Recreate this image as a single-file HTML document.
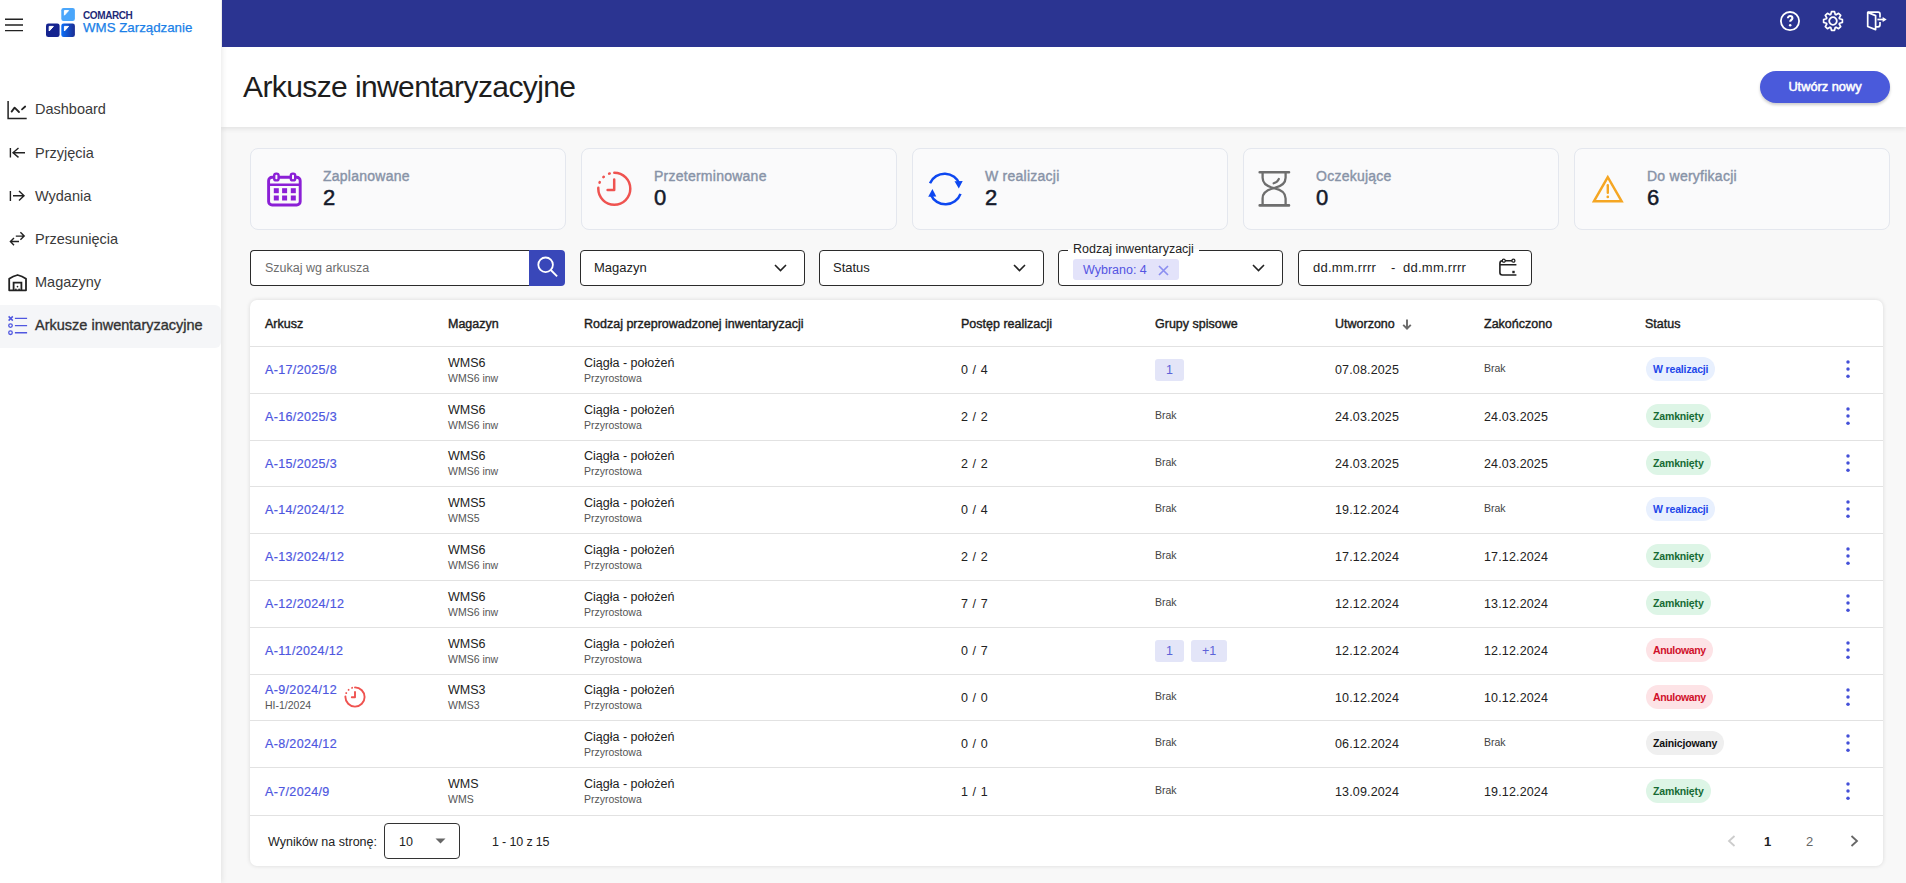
<!DOCTYPE html>
<html><head><meta charset="utf-8">
<style>
*{box-sizing:border-box;margin:0;padding:0}
html,body{width:1906px;height:883px;overflow:hidden}
body{position:relative;background:#F8F8F8;font-family:"Liberation Sans",sans-serif;color:#222}
.abs{position:absolute}
#side{left:0;top:0;width:221px;height:883px;background:#fff;box-shadow:1px 0 6px rgba(0,0,0,.09);z-index:3}
#topbar{left:222px;top:0;width:1684px;height:47px;background:#2B3491;z-index:4}
#phead{left:221px;top:47px;width:1685px;height:80px;background:#fff;box-shadow:0 2px 5px rgba(0,0,0,.09);z-index:2}
.title{left:243px;top:70px;font-size:30px;letter-spacing:-0.6px;color:#1d1d1d;white-space:nowrap;z-index:5}
.btn{left:1760px;top:71px;width:130px;height:32px;border-radius:16px;background:#4A5ADB;color:#fff;-webkit-text-stroke:0.5px #fff;font-size:12.8px;text-align:center;line-height:32px;box-shadow:0 2px 3px rgba(0,0,0,.2);z-index:5}
.nav{position:absolute;left:0;width:221px;height:43px;font-size:14.5px;color:#3a3a3a;white-space:nowrap}
.nav span{position:absolute;left:35px;top:14px}
.nav svg{position:absolute;left:0;top:0}
.nav.act{background:#F5F6F8;border-radius:0 6px 6px 0}
.nav.act span{top:12px;-webkit-text-stroke:0.35px #333;color:#333}
.card{position:absolute;top:148px;width:316px;height:82px;border:1px solid #E4E7EE;border-radius:8px;background:#FAFAFB}
.card .lab{position:absolute;left:72px;top:19px;font-size:14px;color:#8893A7;-webkit-text-stroke:0.4px #8893A7;letter-spacing:0.25px;white-space:nowrap}
.card .val{position:absolute;left:72px;top:36px;font-size:22px;color:#14192A;-webkit-text-stroke:0.5px #14192A}
.card svg{position:absolute;left:0;top:0}
.fld{position:absolute;top:250px;height:36px;border:1.5px solid #2b2b2b;border-radius:4px;background:#fff;font-size:13px;color:#222}
.fld .t{position:absolute;left:13px;top:9px;white-space:nowrap}
#table{left:250px;top:300px;width:1633px;height:566px;background:#fff;border-radius:7px;box-shadow:0 0 4px rgba(0,0,0,.13)}
.th{position:absolute;top:17px;font-size:12.5px;color:#1c1c1c;-webkit-text-stroke:0.4px #1c1c1c;white-space:nowrap}
.hr{position:absolute;left:0;width:1633px;height:1px;background:#E2E2E2}
.row{position:absolute;left:0;width:1633px}
.c1,.c2{position:absolute;top:50%;transform:translateY(-50%);white-space:nowrap}
.c2{margin-top:-0.3px}
.lnk{font-size:12.5px;color:#4E57DF;letter-spacing:0.35px;-webkit-text-stroke:0.2px #4E57DF}
.mn{font-size:12.5px;color:#222}
.sm{font-size:10.5px;color:#555;margin-top:2px}
.brak{font-size:10.5px;color:#444;margin-top:-2px}
.gch{display:inline-block;height:22px;line-height:22px;padding:0 11px;margin-right:7px;border-radius:3px;background:#E3E5F8;color:#5C63D8;font-size:12.5px}
.st{display:inline-block;height:24px;line-height:24px;padding:0 7px;border-radius:12px;font-size:10.5px;font-weight:bold;letter-spacing:-0.15px}
.st.real{background:#E8F0FE;color:#1D47EA}
.st.zam{background:#DDF5E6;color:#166B34}
.st.anu{background:#FDE3E6;color:#D0102A}
.st.ini{background:#EFEFEF;color:#111}
.clk{position:absolute;left:94px;top:50%;margin-top:-11.5px}
.keb{position:absolute;left:1594.7px;top:50%;margin-top:-11px;fill:#4450D8}
.ft{font-size:12.5px;color:#222;white-space:nowrap}
.pg{font-size:13px}

.prog{word-spacing:1.2px}
.dt{letter-spacing:0.15px}
.stc{margin-top:-0.7px}
.st.anu{letter-spacing:-0.35px}

</style></head>
<body>
<div id="side" class="abs">
  <svg class="abs" style="left:5px;top:17px" width="18" height="15" viewBox="0 0 18 15"><path d="M0 2.2h18M0 8h18M0 13.6h18" stroke="#222" stroke-width="1.4"/></svg>
  <svg class="abs" style="left:46px;top:8px" width="30" height="30" viewBox="0 0 30 30">
    <defs><linearGradient id="lg1" x1="0" x2="1" y1="0" y2="0"><stop offset="0" stop-color="#0A70FA"/><stop offset="1" stop-color="#1B2C92"/></linearGradient></defs>
    <rect x="15.3" y="0" width="13.6" height="13" rx="2.3" fill="#4AA6FB"/>
    <rect x="0" y="15.5" width="13.6" height="13.5" rx="2.3" fill="#14238F"/>
    <rect x="15.3" y="15.5" width="13.6" height="13.5" rx="2.3" fill="url(#lg1)"/>
    <path d="M18.4 2.6h4.2l-4.2 4.6z" fill="#fff" stroke="#fff" stroke-width="1" stroke-linejoin="round"/>
    <path d="M3.2 18.4h4.2l-4.2 4.6z" fill="#fff" stroke="#fff" stroke-width="1" stroke-linejoin="round"/>
    <path d="M18.4 18.4h4.2l-4.2 4.6z" fill="#fff" stroke="#fff" stroke-width="1" stroke-linejoin="round"/>
  </svg>
  <div class="abs" style="left:83px;top:10px;font-size:10px;font-weight:bold;color:#1E2A78;letter-spacing:-0.4px">COMARCH</div>
  <div class="abs" style="left:83px;top:20px;font-size:13.3px;color:#1A7FE8;-webkit-text-stroke:0.25px #1A7FE8;white-space:nowrap">WMS Zarządzanie</div>
  <div class="nav" style="top:87px"><svg width="30" height="43" viewBox="0 0 30 43"><path d="M8.1 14v17.6H26.7" fill="none" stroke="#222" stroke-width="1.5"/><path d="M11.6 24.6L14.6 20.6 19 25M22 22.4L25.2 19.5" fill="none" stroke="#222" stroke-width="1.8" stroke-linecap="round" stroke-linejoin="round"/></svg><span>Dashboard</span></div>
  <div class="nav" style="top:131px"><svg width="30" height="43" viewBox="0 0 30 43"><path d="M10.4 16.9v9.5M25 21.7H12.7M18.5 17l-5.5 4.7 5.5 4.7" fill="none" stroke="#222" stroke-width="1.4"/></svg><span>Przyjęcia</span></div>
  <div class="nav" style="top:174px"><svg width="30" height="43" viewBox="0 0 30 43"><path d="M10.4 16.9v10M13 21.8h11.5M19 17l5 4.8-5 4.8" fill="none" stroke="#222" stroke-width="1.4"/></svg><span>Wydania</span></div>
  <div class="nav" style="top:217px"><svg width="30" height="43" viewBox="0 0 30 43"><path d="M15.8 19.1h8.4M20.4 15.3l3.8 3.8-3.8 3.6M19 24.5h-8.4M14 20.9l-3.6 3.6 3.6 3.7" fill="none" stroke="#222" stroke-width="1.4"/></svg><span>Przesunięcia</span></div>
  <div class="nav" style="top:260px"><svg width="30" height="43" viewBox="0 0 30 43"><path d="M9.2 30.3V18.8Q13 16.2 17.6 15 22.2 16.2 26 18.8v11.5z" fill="none" stroke="#222" stroke-width="1.8" stroke-linejoin="round"/><path d="M13.6 30.3v-7.6h7.8v7.6" fill="none" stroke="#222" stroke-width="1.8"/><circle cx="17.5" cy="26.6" r="0.85" fill="#222"/><circle cx="15.9" cy="29.3" r="0.85" fill="#222"/><circle cx="19.1" cy="29.3" r="0.85" fill="#222"/></svg><span>Magazyny</span></div>
  <div class="nav act" style="top:305px"><svg width="30" height="43" viewBox="0 0 30 43"><path d="M8.6 11.4l4.2 4.2M12.8 11.4l-4.2 4.2" fill="none" stroke="#5057E0" stroke-width="1.5"/><path d="M14.9 13.4h12.2M14.9 20.6h12.2M14.9 27.7h12.2" fill="none" stroke="#5057E0" stroke-width="1.4"/><circle cx="10.5" cy="20.6" r="1.8" fill="none" stroke="#5057E0" stroke-width="1.3"/><circle cx="10.5" cy="27.7" r="1.8" fill="none" stroke="#5057E0" stroke-width="1.3"/></svg><span>Arkusze inwentaryzacyjne</span></div>
</div>
<div id="topbar" class="abs">
  <svg class="abs" style="left:1556px;top:0" width="24" height="43" viewBox="0 0 24 43"><circle cx="12" cy="21.1" r="9.1" fill="none" stroke="#fff" stroke-width="1.8"/><path d="M9.9 18.3c0-1.4 1-2.3 2.2-2.3s2.3.9 2.3 2.2c0 1.6-2.2 1.8-2.2 3.6" fill="none" stroke="#fff" stroke-width="2.1"/><circle cx="12.2" cy="25.3" r="1.25" fill="#fff"/></svg>
  <svg class="abs" style="left:1599px;top:0" width="24" height="43" viewBox="0 0 24 43"><g transform="translate(12 21)"><path d="M-2.24 -6.53 L-1.51 -9.38 L1.51 -9.38 L2.24 -6.53 L3.03 -6.20 L5.56 -7.70 L7.70 -5.56 L6.20 -3.03 L6.53 -2.24 L9.38 -1.51 L9.38 1.51 L6.53 2.24 L6.20 3.03 L7.70 5.56 L5.56 7.70 L3.03 6.20 L2.24 6.53 L1.51 9.38 L-1.51 9.38 L-2.24 6.53 L-3.03 6.20 L-5.56 7.70 L-7.70 5.56 L-6.20 3.03 L-6.53 2.24 L-9.38 1.51 L-9.38 -1.51 L-6.53 -2.24 L-6.20 -3.03 L-7.70 -5.56 L-5.56 -7.70 L-3.03 -6.20Z" stroke-linejoin="round" fill="none" stroke="#fff" stroke-width="1.7"/><circle r="3.8" fill="none" stroke="#fff" stroke-width="1.8"/></g></svg>
  <svg class="abs" style="left:1639px;top:0" width="30" height="43" viewBox="0 0 30 43"><path d="M6.8 12.1h10.2c1.2 0 2 .8 2 2v3.3M19 22v2.8c0 1.2-.8 2-2 2h-2.2" fill="none" stroke="#fff" stroke-width="1.7"/><path d="M6.7 12.4l7.9 3.2v14l-7.9-3.1z" fill="none" stroke="#fff" stroke-width="1.7" stroke-linejoin="round"/><path d="M16.4 19.5h5.6" stroke="#fff" stroke-width="1.7"/><path d="M21.6 16.9l4.1 2.6-4.1 2.6z" fill="#fff"/></svg>
</div>
<div id="phead" class="abs"></div>
<div class="abs title">Arkusze inwentaryzacyjne</div>
<div class="abs btn">Utwórz nowy</div>

<div class="card" style="left:250px"><svg width="70" height="80" viewBox="0 0 70 80"><rect x="17.6" y="28.2" width="31.6" height="27.8" rx="3.5" fill="none" stroke="#8B1FD6" stroke-width="2.9"/><path d="M17.6 35.8h31.6" stroke="#8B1FD6" stroke-width="2.6"/><rect x="23.2" y="24.6" width="4.4" height="6.8" rx="2" fill="#FAFAFB" stroke="#8B1FD6" stroke-width="2.4"/><rect x="39.8" y="24.6" width="4.4" height="6.8" rx="2" fill="#FAFAFB" stroke="#8B1FD6" stroke-width="2.4"/><g fill="#8B1FD6"><rect x="22.8" y="39.2" width="5" height="5"/><rect x="31.1" y="39.2" width="5" height="5"/><rect x="39.8" y="39.2" width="5" height="5"/><rect x="22.8" y="46.5" width="5" height="5"/><rect x="31.1" y="46.5" width="5" height="5"/><rect x="39.8" y="46.5" width="5" height="5"/></g></svg><div class="lab">Zaplanowane</div><div class="val">2</div></div>
<div class="card" style="left:581px"><svg width="70" height="80" viewBox="0 0 70 80"><circle cx="32.3" cy="39.8" r="16" fill="none" stroke="#EF5350" stroke-width="2.5" stroke-dasharray="75.9 5.3 0.6 6.1 0.6 6.1 0.6 5.3" stroke-linecap="round" transform="rotate(-90 32.3 39.8)"/><path d="M32.2 30.6v10.4h-6.6" fill="none" stroke="#EF5350" stroke-width="2.5" stroke-linecap="round" stroke-linejoin="round"/></svg><div class="lab">Przeterminowane</div><div class="val">0</div></div>
<div class="card" style="left:912px"><svg width="70" height="80" viewBox="1.5 0 70 80"><path d="M18.5 34.2A16 16 0 0 1 48.2 35.3" fill="none" stroke="#0D47F0" stroke-width="2.5"/><path d="M43 32.3L51.2 32.1 47.3 39.6z" fill="#0D47F0"/><path d="M49 44.8A16 16 0 0 1 19.3 45.8" fill="none" stroke="#0D47F0" stroke-width="2.5"/><path d="M16.7 47.8L24.8 47.6 20.9 40.1z" fill="#0D47F0"/></svg><div class="lab">W realizacji</div><div class="val">2</div></div>
<div class="card" style="left:1243px"><svg width="70" height="80" viewBox="0 0 70 80"><path d="M15.7 23.3h29.3M15.7 56.4h29.3" stroke="#6E6E6E" stroke-width="2.6" stroke-linecap="round"/><path d="M18.6 24V28.8C18.6 34.8 23.6 37.7 30.1 39.1 36.6 40.5 41.6 43.4 41.6 49.4V56M41.6 24V28.8C41.6 34.8 36.6 37.7 30.1 39.1 23.6 40.5 18.6 43.4 18.6 49.4V56" fill="none" stroke="#6E6E6E" stroke-width="2.3"/><path d="M29.6 34.3c2.4-.6 4.4-2.1 5.3-4.4" fill="none" stroke="#6E6E6E" stroke-width="2.2" stroke-linecap="round"/></svg><div class="lab">Oczekujące</div><div class="val">0</div></div>
<div class="card" style="left:1574px"><svg width="70" height="80" viewBox="0 0 70 80"><path d="M32.8 28.2L19 52.2h27.6z" fill="none" stroke="#F5A623" stroke-width="2.5" stroke-linejoin="miter"/><path d="M32.8 36.2v7.6" stroke="#F5A623" stroke-width="2.4" stroke-linecap="round"/><circle cx="32.8" cy="47.9" r="1.35" fill="#F5A623"/></svg><div class="lab">Do weryfikacji</div><div class="val">6</div></div>

<div class="fld" style="left:250px;width:281px;border-radius:4px 0 0 4px;border-right:none"><div class="t" style="color:#6d6d6d;font-size:12.5px;left:14px;top:10px">Szukaj wg arkusza</div></div>
<div class="abs" style="left:529px;top:250px;width:36px;height:36px;background:#3947B9;border-radius:0 4px 4px 0"><svg width="36" height="36" viewBox="0 0 36 36"><circle cx="16.6" cy="14.8" r="7.3" fill="none" stroke="#fff" stroke-width="1.8"/><path d="M21.8 20l6.3 6.3" stroke="#fff" stroke-width="1.9"/></svg></div>
<div class="fld" style="left:580px;width:225px"><div class="t">Magazyn</div><svg class="abs" style="left:193px;top:13px" width="13" height="8" viewBox="0 0 13 8"><path d="M1 1l5.5 5.5L12 1" fill="none" stroke="#222" stroke-width="1.6"/></svg></div>
<div class="fld" style="left:819px;width:225px"><div class="t">Status</div><svg class="abs" style="left:193px;top:13px" width="13" height="8" viewBox="0 0 13 8"><path d="M1 1l5.5 5.5L12 1" fill="none" stroke="#222" stroke-width="1.6"/></svg></div>
<div class="fld" style="left:1058px;width:225px"><div class="abs" style="left:9px;top:-9px;background:#F8F8F8;padding:0 5px;font-size:12.5px;color:#222;line-height:14px;white-space:nowrap;background:linear-gradient(#F8F8F8 50%,#fff 50%)">Rodzaj inwentaryzacji</div><div class="abs" style="left:14px;top:8px;width:106px;height:21px;border-radius:3px;background:#E3E3FA;font-size:12.5px;color:#5454E2;line-height:22px;padding-left:10px;white-space:nowrap">Wybrano: 4<svg class="abs" style="left:85px;top:6px" width="11" height="11" viewBox="0 0 11 11"><path d="M1 1l9 9M10 1l-9 9" stroke="#8C8FF0" stroke-width="1.7"/></svg></div><svg class="abs" style="left:193px;top:13px" width="13" height="8" viewBox="0 0 13 8"><path d="M1 1l5.5 5.5L12 1" fill="none" stroke="#222" stroke-width="1.6"/></svg></div>
<div class="fld" style="left:1298px;width:234px"><div class="t" style="left:14px;letter-spacing:0.25px">dd.mm.rrrr</div><div class="t" style="left:92px">-</div><div class="t" style="left:104px;letter-spacing:0.25px">dd.mm.rrrr</div><svg class="abs" style="left:199px;top:6.8px" width="22" height="22" viewBox="0 0 22 22"><path d="M4.4 2.8c-1.5 0-2.5 1.1-2.5 2.6v9.1c0 1.5 1 2.5 2.5 2.5h14M1.9 6.8h16.5M5.8 2.7h9.6" fill="none" stroke="#222" stroke-width="1.6"/><circle cx="5.8" cy="2.7" r="1.5" fill="#fff" stroke="#222" stroke-width="1.3"/><circle cx="15.4" cy="2.7" r="1.5" fill="#fff" stroke="#222" stroke-width="1.3"/><rect x="14.3" y="12.8" width="2.4" height="2.4" fill="#222"/></svg></div>
<div id="table" class="abs">
<div class="th" style="left:15px">Arkusz</div><div class="th" style="left:198px">Magazyn</div><div class="th" style="left:334px">Rodzaj przeprowadzonej inwentaryzacji</div><div class="th" style="left:711px">Postęp realizacji</div><div class="th" style="left:905px">Grupy spisowe</div><div class="th" style="left:1085px">Utworzono <svg width="10" height="11" viewBox="0 0 10 11" style="vertical-align:-2px;margin-left:4px"><path d="M5 0.5v9M1.2 5.8L5 9.6 8.8 5.8" fill="none" stroke="#6a6a6a" stroke-width="1.9"/></svg></div><div class="th" style="left:1234px">Zakończono</div><div class="th" style="left:1395px">Status</div>
<div class="hr" style="top:46px"></div><div class="hr" style="top:93px"></div><div class="hr" style="top:140px"></div><div class="hr" style="top:186px"></div><div class="hr" style="top:233px"></div><div class="hr" style="top:280px"></div><div class="hr" style="top:327px"></div><div class="hr" style="top:374px"></div><div class="hr" style="top:420px"></div><div class="hr" style="top:467px"></div><div class="hr" style="top:515px"></div>
<div class="row" style="top:47.00px;height:46.00px"><div class="c1 lnk" style="left:15px">A-17/2025/8</div><div class="c2" style="left:198px"><div class="mn">WMS6</div><div class="sm">WMS6 inw</div></div><div class="c2" style="left:334px"><div class="mn">Ciągła - położeń</div><div class="sm">Przyrostowa</div></div><div class="c1 mn prog" style="left:711px">0 / 4</div><div class="c1" style="left:905px"><span class="gch">1</span></div><div class="c1 mn dt" style="left:1085px">07.08.2025</div><div class="c1 brak" style="left:1234px">Brak</div><div class="c1 stc" style="left:1396px"><span class="st real">W realizacji</span></div><svg class="keb" width="6" height="20" viewBox="0 0 6 20"><circle cx="3" cy="2.9" r="1.75"/><circle cx="3" cy="10.1" r="1.75"/><circle cx="3" cy="17.3" r="1.75"/></svg></div>
<div class="row" style="top:94.00px;height:46.00px"><div class="c1 lnk" style="left:15px">A-16/2025/3</div><div class="c2" style="left:198px"><div class="mn">WMS6</div><div class="sm">WMS6 inw</div></div><div class="c2" style="left:334px"><div class="mn">Ciągła - położeń</div><div class="sm">Przyrostowa</div></div><div class="c1 mn prog" style="left:711px">2 / 2</div><div class="c1 brak" style="left:905px">Brak</div><div class="c1 mn dt" style="left:1085px">24.03.2025</div><div class="c1 mn dt" style="left:1234px">24.03.2025</div><div class="c1 stc" style="left:1396px"><span class="st zam">Zamknięty</span></div><svg class="keb" width="6" height="20" viewBox="0 0 6 20"><circle cx="3" cy="2.9" r="1.75"/><circle cx="3" cy="10.1" r="1.75"/><circle cx="3" cy="17.3" r="1.75"/></svg></div>
<div class="row" style="top:141.00px;height:45.00px"><div class="c1 lnk" style="left:15px">A-15/2025/3</div><div class="c2" style="left:198px"><div class="mn">WMS6</div><div class="sm">WMS6 inw</div></div><div class="c2" style="left:334px"><div class="mn">Ciągła - położeń</div><div class="sm">Przyrostowa</div></div><div class="c1 mn prog" style="left:711px">2 / 2</div><div class="c1 brak" style="left:905px">Brak</div><div class="c1 mn dt" style="left:1085px">24.03.2025</div><div class="c1 mn dt" style="left:1234px">24.03.2025</div><div class="c1 stc" style="left:1396px"><span class="st zam">Zamknięty</span></div><svg class="keb" width="6" height="20" viewBox="0 0 6 20"><circle cx="3" cy="2.9" r="1.75"/><circle cx="3" cy="10.1" r="1.75"/><circle cx="3" cy="17.3" r="1.75"/></svg></div>
<div class="row" style="top:187.00px;height:46.00px"><div class="c1 lnk" style="left:15px">A-14/2024/12</div><div class="c2" style="left:198px"><div class="mn">WMS5</div><div class="sm">WMS5</div></div><div class="c2" style="left:334px"><div class="mn">Ciągła - położeń</div><div class="sm">Przyrostowa</div></div><div class="c1 mn prog" style="left:711px">0 / 4</div><div class="c1 brak" style="left:905px">Brak</div><div class="c1 mn dt" style="left:1085px">19.12.2024</div><div class="c1 brak" style="left:1234px">Brak</div><div class="c1 stc" style="left:1396px"><span class="st real">W realizacji</span></div><svg class="keb" width="6" height="20" viewBox="0 0 6 20"><circle cx="3" cy="2.9" r="1.75"/><circle cx="3" cy="10.1" r="1.75"/><circle cx="3" cy="17.3" r="1.75"/></svg></div>
<div class="row" style="top:234.00px;height:46.00px"><div class="c1 lnk" style="left:15px">A-13/2024/12</div><div class="c2" style="left:198px"><div class="mn">WMS6</div><div class="sm">WMS6 inw</div></div><div class="c2" style="left:334px"><div class="mn">Ciągła - położeń</div><div class="sm">Przyrostowa</div></div><div class="c1 mn prog" style="left:711px">2 / 2</div><div class="c1 brak" style="left:905px">Brak</div><div class="c1 mn dt" style="left:1085px">17.12.2024</div><div class="c1 mn dt" style="left:1234px">17.12.2024</div><div class="c1 stc" style="left:1396px"><span class="st zam">Zamknięty</span></div><svg class="keb" width="6" height="20" viewBox="0 0 6 20"><circle cx="3" cy="2.9" r="1.75"/><circle cx="3" cy="10.1" r="1.75"/><circle cx="3" cy="17.3" r="1.75"/></svg></div>
<div class="row" style="top:281.00px;height:46.00px"><div class="c1 lnk" style="left:15px">A-12/2024/12</div><div class="c2" style="left:198px"><div class="mn">WMS6</div><div class="sm">WMS6 inw</div></div><div class="c2" style="left:334px"><div class="mn">Ciągła - położeń</div><div class="sm">Przyrostowa</div></div><div class="c1 mn prog" style="left:711px">7 / 7</div><div class="c1 brak" style="left:905px">Brak</div><div class="c1 mn dt" style="left:1085px">12.12.2024</div><div class="c1 mn dt" style="left:1234px">13.12.2024</div><div class="c1 stc" style="left:1396px"><span class="st zam">Zamknięty</span></div><svg class="keb" width="6" height="20" viewBox="0 0 6 20"><circle cx="3" cy="2.9" r="1.75"/><circle cx="3" cy="10.1" r="1.75"/><circle cx="3" cy="17.3" r="1.75"/></svg></div>
<div class="row" style="top:328.00px;height:46.00px"><div class="c1 lnk" style="left:15px">A-11/2024/12</div><div class="c2" style="left:198px"><div class="mn">WMS6</div><div class="sm">WMS6 inw</div></div><div class="c2" style="left:334px"><div class="mn">Ciągła - położeń</div><div class="sm">Przyrostowa</div></div><div class="c1 mn prog" style="left:711px">0 / 7</div><div class="c1" style="left:905px"><span class="gch">1</span><span class="gch">+1</span></div><div class="c1 mn dt" style="left:1085px">12.12.2024</div><div class="c1 mn dt" style="left:1234px">12.12.2024</div><div class="c1 stc" style="left:1396px"><span class="st anu">Anulowany</span></div><svg class="keb" width="6" height="20" viewBox="0 0 6 20"><circle cx="3" cy="2.9" r="1.75"/><circle cx="3" cy="10.1" r="1.75"/><circle cx="3" cy="17.3" r="1.75"/></svg></div>
<div class="row" style="top:375.00px;height:45.00px"><div class="c2" style="left:15px"><div class="lnk">A-9/2024/12</div><div class="sm">HI-1/2024</div></div><svg class="clk" width="22" height="22" viewBox="0 0 22 22"><circle cx="11" cy="11" r="9.6" fill="none" stroke="#EF5350" stroke-width="1.9" stroke-linecap="round" stroke-dasharray="45.6 3.35 0.01 4 0.01 4 0.01 3.32" transform="rotate(-90 11 11)"/><path d="M11 6v5.3H7.8" fill="none" stroke="#EF5350" stroke-width="1.9" stroke-linecap="round" stroke-linejoin="round"/></svg><div class="c2" style="left:198px"><div class="mn">WMS3</div><div class="sm">WMS3</div></div><div class="c2" style="left:334px"><div class="mn">Ciągła - położeń</div><div class="sm">Przyrostowa</div></div><div class="c1 mn prog" style="left:711px">0 / 0</div><div class="c1 brak" style="left:905px">Brak</div><div class="c1 mn dt" style="left:1085px">10.12.2024</div><div class="c1 mn dt" style="left:1234px">10.12.2024</div><div class="c1 stc" style="left:1396px"><span class="st anu">Anulowany</span></div><svg class="keb" width="6" height="20" viewBox="0 0 6 20"><circle cx="3" cy="2.9" r="1.75"/><circle cx="3" cy="10.1" r="1.75"/><circle cx="3" cy="17.3" r="1.75"/></svg></div>
<div class="row" style="top:421.00px;height:46.00px"><div class="c1 lnk" style="left:15px">A-8/2024/12</div><div class="c2" style="left:334px"><div class="mn">Ciągła - położeń</div><div class="sm">Przyrostowa</div></div><div class="c1 mn prog" style="left:711px">0 / 0</div><div class="c1 brak" style="left:905px">Brak</div><div class="c1 mn dt" style="left:1085px">06.12.2024</div><div class="c1 brak" style="left:1234px">Brak</div><div class="c1 stc" style="left:1396px"><span class="st ini">Zainicjowany</span></div><svg class="keb" width="6" height="20" viewBox="0 0 6 20"><circle cx="3" cy="2.9" r="1.75"/><circle cx="3" cy="10.1" r="1.75"/><circle cx="3" cy="17.3" r="1.75"/></svg></div>
<div class="row" style="top:468.00px;height:47.00px"><div class="c1 lnk" style="left:15px">A-7/2024/9</div><div class="c2" style="left:198px"><div class="mn">WMS</div><div class="sm">WMS</div></div><div class="c2" style="left:334px"><div class="mn">Ciągła - położeń</div><div class="sm">Przyrostowa</div></div><div class="c1 mn prog" style="left:711px">1 / 1</div><div class="c1 brak" style="left:905px">Brak</div><div class="c1 mn dt" style="left:1085px">13.09.2024</div><div class="c1 mn dt" style="left:1234px">19.12.2024</div><div class="c1 stc" style="left:1396px"><span class="st zam">Zamknięty</span></div><svg class="keb" width="6" height="20" viewBox="0 0 6 20"><circle cx="3" cy="2.9" r="1.75"/><circle cx="3" cy="10.1" r="1.75"/><circle cx="3" cy="17.3" r="1.75"/></svg></div>
<div class="abs ft" style="left:18px;top:534.5px">Wyników na stronę:</div>
<div class="abs" style="left:134px;top:523px;width:76px;height:36px;border:1px solid #333;border-radius:4px"></div>
<div class="abs ft" style="left:149px;top:534.5px">10</div>
<svg class="abs" style="left:185px;top:538px" width="11" height="6" viewBox="0 0 11 6"><path d="M0.5 0.5h10L5.5 5.5z" fill="#666"/></svg>
<div class="abs ft" style="left:242px;top:534.5px;letter-spacing:-0.15px">1 - 10 z 15</div>
<svg class="abs" style="left:1477px;top:535px" width="9" height="12" viewBox="0 0 9 12"><path d="M7.5 1L2 6l5.5 5" fill="none" stroke="#ccc" stroke-width="1.8"/></svg>
<div class="abs pg" style="left:1514px;top:534px;font-weight:bold;color:#222">1</div>
<div class="abs pg" style="left:1556px;top:534px;color:#666">2</div>
<svg class="abs" style="left:1600px;top:535px" width="9" height="12" viewBox="0 0 9 12"><path d="M1.5 1L7 6l-5.5 5" fill="none" stroke="#666" stroke-width="1.8"/></svg>
</div>
</body></html>
